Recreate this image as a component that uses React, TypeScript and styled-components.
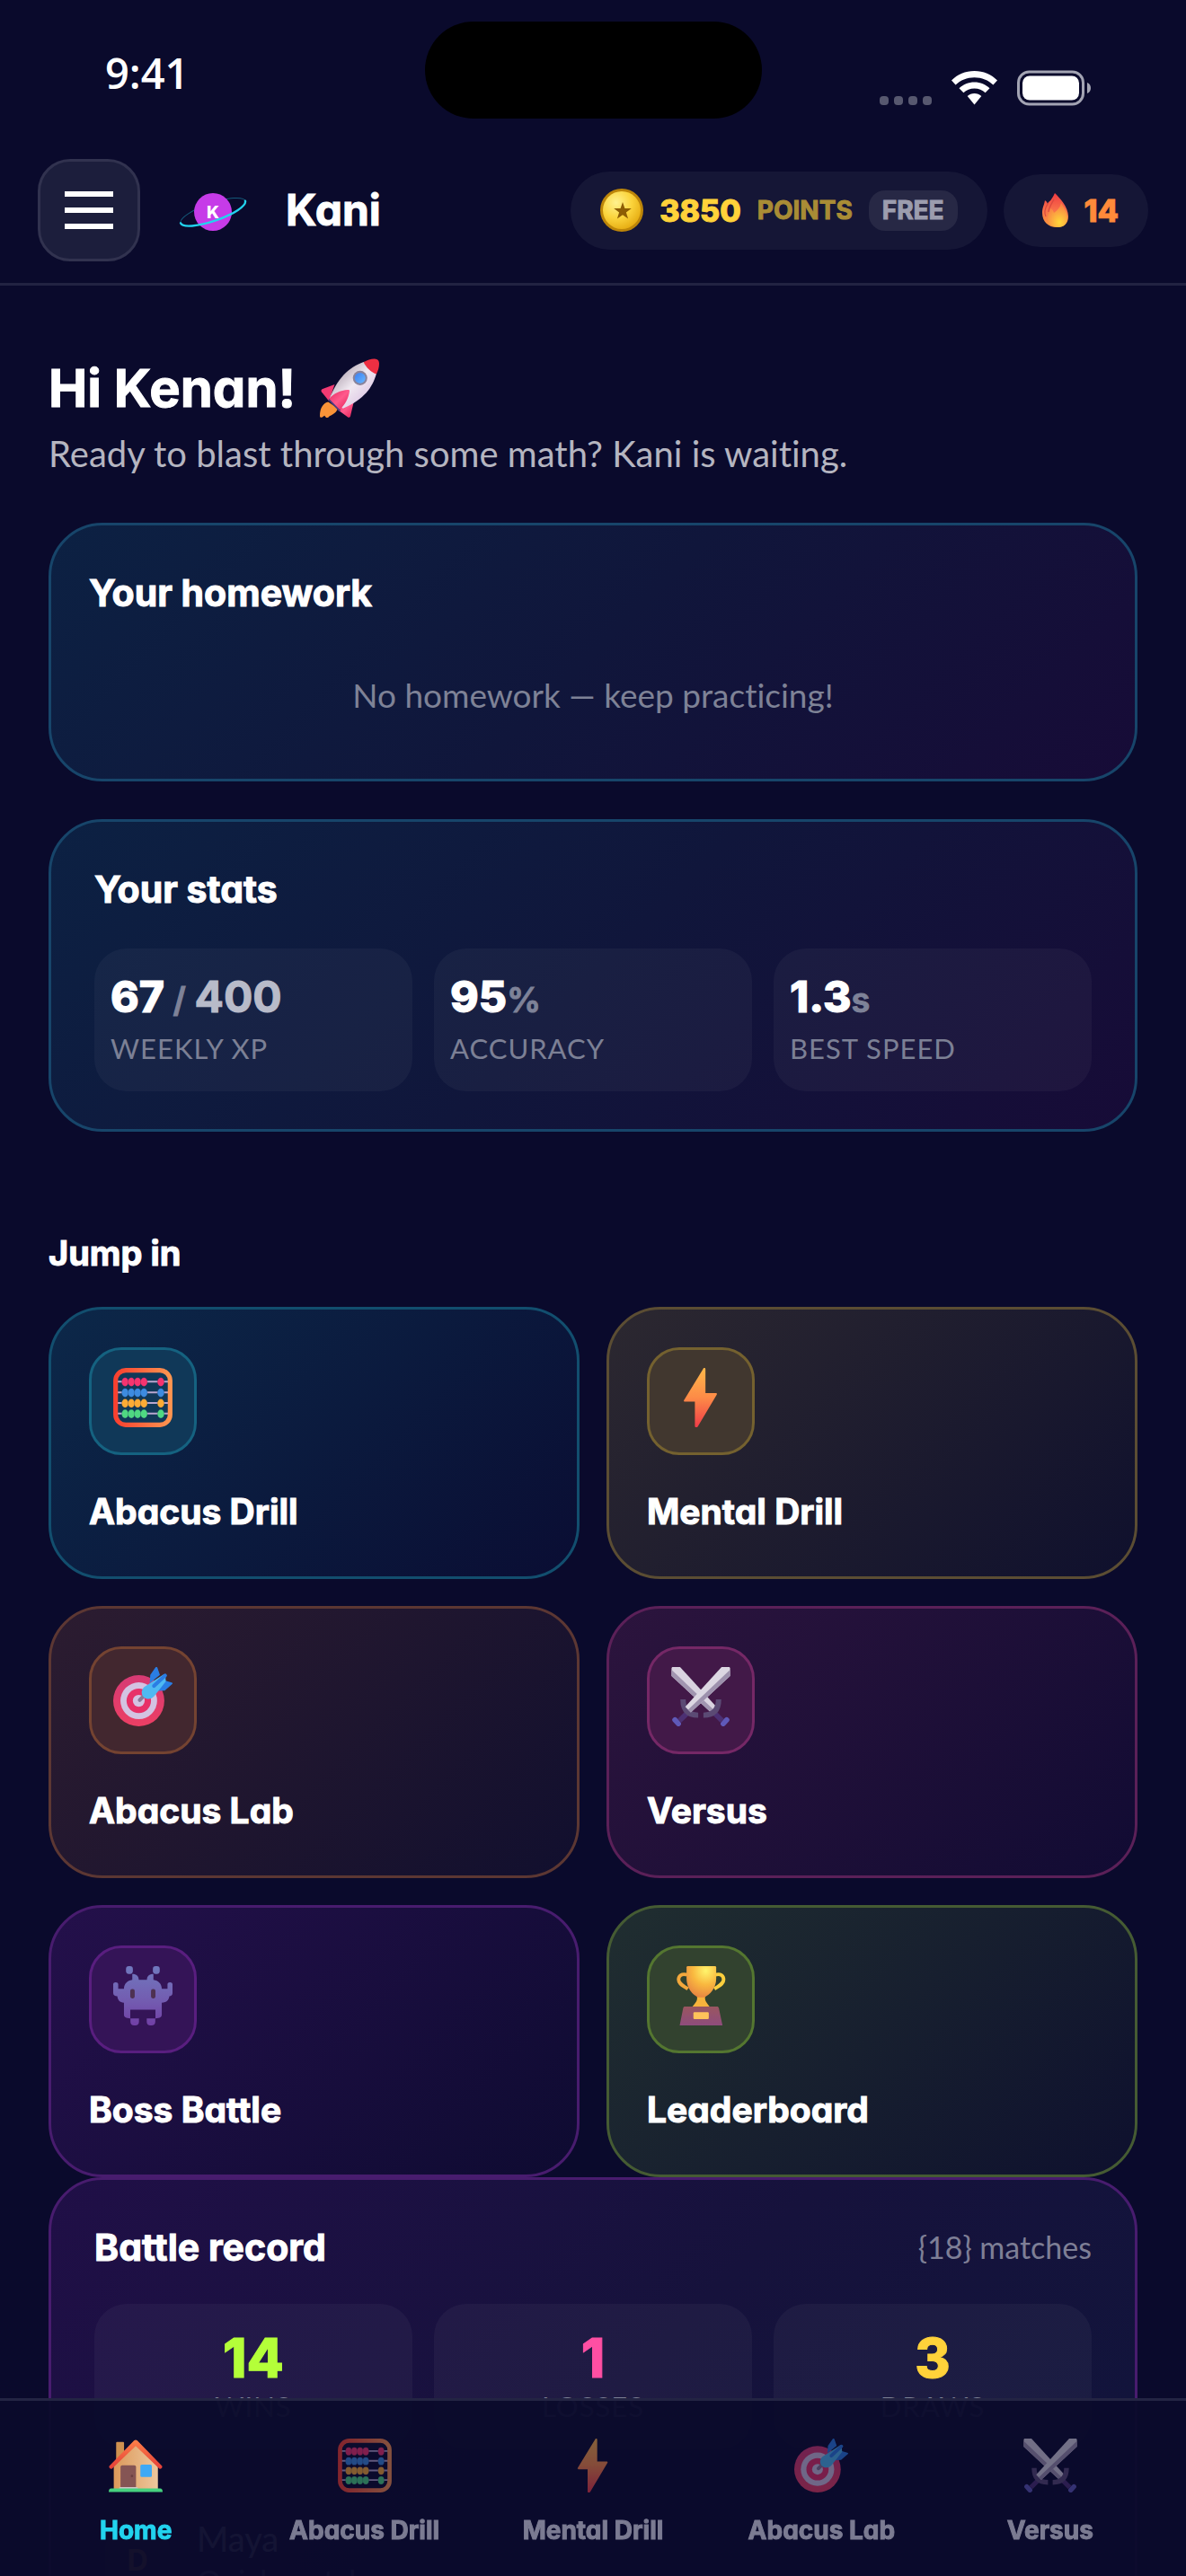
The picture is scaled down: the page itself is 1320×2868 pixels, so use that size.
import React from 'react';
import styled, { createGlobalStyle } from 'styled-components';

type Tone = 'cyan' | 'gold' | 'orange' | 'pink' | 'purple' | 'lime';

const tones: Record<
  Tone,
  { from: string; to: string; border: string; tile: string; tileBorder: string }
> = {
  cyan: {
    from: '#0c2849',
    to: '#0a0d33',
    border: '#124e6e',
    tile: '#103858',
    tileBorder: '#156280',
  },
  gold: {
    from: '#2c2830',
    to: '#0f102d',
    border: '#5b4d33',
    tile: '#41372f',
    tileBorder: '#74612f',
  },
  orange: {
    from: '#2c1c30',
    to: '#110f2e',
    border: '#5c3733',
    tile: '#42272f',
    tileBorder: '#744331',
  },
  pink: {
    from: '#2c143d',
    to: '#110b33',
    border: '#5b2058',
    tile: '#421948',
    tileBorder: '#752866',
  },
  purple: {
    from: '#24104b',
    to: '#0e0b31',
    border: '#481c6e',
    tile: '#341457',
    tileBorder: '#591e7f',
  },
  lime: {
    from: '#202e30',
    to: '#0e102e',
    border: '#455b33',
    tile: '#32422f',
    tileBorder: '#547630',
  },
};

const stats = [
  { value: '67', separator: ' / ', goal: '400', label: 'Weekly XP' },
  { value: '95', unit: '%', label: 'Accuracy' },
  { value: '1.3', unit: 's', label: 'Best speed' },
];

const record = [
  { value: '14', label: 'Wins', color: '#b4ff39' },
  { value: '1', label: 'Losses', color: '#ff4fa3' },
  { value: '3', label: 'Draws', color: '#ffd23a' },
];

const modes: { title: string; tone: Tone; icon: React.ReactNode }[] = [
  { title: 'Abacus Drill', tone: 'cyan', icon: <AbacusIcon /> },
  { title: 'Mental Drill', tone: 'gold', icon: <BoltIcon /> },
  { title: 'Abacus Lab', tone: 'orange', icon: <TargetIcon /> },
  { title: 'Versus', tone: 'pink', icon: <SwordsIcon /> },
  { title: 'Boss Battle', tone: 'purple', icon: <InvaderIcon /> },
  { title: 'Leaderboard', tone: 'lime', icon: <TrophyIcon /> },
];

const tabs = [
  { title: 'Home', icon: <HouseIcon />, active: true },
  { title: 'Abacus Drill', icon: <AbacusIcon /> },
  { title: 'Mental Drill', icon: <BoltIcon /> },
  { title: 'Abacus Lab', icon: <TargetIcon /> },
  { title: 'Versus', icon: <SwordsIcon /> },
];

export default function App() {
  return (
    <>
      <GlobalStyle />
      <Screen>
        <Header>
          <StatusBar>
            <Clock>9:41</Clock>
            <Island />
            <StatusIcons>
              <SignalIcon />
              <WifiIcon />
              <BatteryIcon />
            </StatusIcons>
          </StatusBar>
          <Toolbar>
            <MenuButton type="button" aria-label="Open menu">
              <MenuLine />
              <MenuLine />
              <MenuLine />
            </MenuButton>
            <Logo />
            <Brand>Kani</Brand>
            <Pills>
              <PointsPill>
                <CoinIcon />
                <Points>3850</Points>
                <PointsLabel>POINTS</PointsLabel>
                <Plan>FREE</Plan>
              </PointsPill>
              <StreakPill>
                <FlameIcon />
                <Streak>14</Streak>
              </StreakPill>
            </Pills>
          </Toolbar>
        </Header>

        <Main>
          <Greeting>
            Hi Kenan! <RocketIcon />
          </Greeting>
          <Subtitle>Ready to blast through some math? Kani is waiting.</Subtitle>

          <HomeworkCard>
            <CardTitle>Your homework</CardTitle>
            <Empty>No homework — keep practicing!</Empty>
          </HomeworkCard>

          <StatsCard>
            <CardTitle>Your stats</CardTitle>
            <Tiles>
              {stats.map((stat) => (
                <StatTile key={stat.label}>
                  <StatValue>
                    {stat.value}
                    {stat.separator && <Unit>{stat.separator}</Unit>}
                    {stat.goal && <Goal>{stat.goal}</Goal>}
                    {stat.unit && <Unit>{stat.unit}</Unit>}
                  </StatValue>
                  <TileLabel>{stat.label}</TileLabel>
                </StatTile>
              ))}
            </Tiles>
          </StatsCard>

          <SectionTitle>Jump in</SectionTitle>
          <ModeGrid>
            {modes.map((mode) => (
              <ModeCard key={mode.title} href="#" $tone={mode.tone}>
                <ModeIcon $tone={mode.tone}>{mode.icon}</ModeIcon>
                <ModeTitle>{mode.title}</ModeTitle>
              </ModeCard>
            ))}
          </ModeGrid>

          <BattleCard>
            <BattleHead>
              <CardTitle>Battle record</CardTitle>
              <Matches>{'{18} matches'}</Matches>
            </BattleHead>
            <BattleTiles>
              {record.map((item) => (
                <RecordTile key={item.label}>
                  <RecordValue $color={item.color}>{item.value}</RecordValue>
                  <TileLabel>{item.label}</TileLabel>
                </RecordTile>
              ))}
            </BattleTiles>
            <Match>
              <Avatar>D</Avatar>
              <div>
                <Opponent>Maya</Opponent>
                <MatchType>Quick match</MatchType>
              </div>
            </Match>
          </BattleCard>
        </Main>

        <TabBar>
          {tabs.map((tab) => (
            <Tab key={tab.title} href="#" $active={tab.active}>
              <TabIcon $active={tab.active}>{tab.icon}</TabIcon>
              <TabLabel>{tab.title}</TabLabel>
            </Tab>
          ))}
        </TabBar>
      </Screen>
    </>
  );
}

function Logo() {
  return (
    <LogoSvg viewBox="0 0 90 90" aria-hidden="true">
      <g transform="rotate(-19 45 47)">
        <path
          d="M7 47a38 10 0 0 1 76 0"
          fill="none"
          stroke="#22d3ee"
          strokeWidth="1"
          opacity=".4"
        />
      </g>
      <circle cx="45" cy="47" r="21" fill="#c63be8" />
      <text
        x="45"
        y="54"
        textAnchor="middle"
        fontFamily="Inter, sans-serif"
        fontWeight="800"
        fontSize="19"
        fill="#fff"
      >
        K
      </text>
      <g transform="rotate(-19 45 47)">
        <path
          d="M7 47a38 10 0 0 0 76 0"
          fill="none"
          stroke="#22d3ee"
          strokeWidth="2.4"
          strokeLinecap="round"
        />
      </g>
    </LogoSvg>
  );
}

function SignalIcon() {
  return (
    <svg width="58" height="40" viewBox="0 0 58 40" fill="#57586f">
      {[0, 16, 32, 48].map((x) => (
        <rect key={x} x={x} y="29" width="10" height="10" rx="4" />
      ))}
    </svg>
  );
}

function WifiIcon() {
  return (
    <svg width="51" height="40" viewBox="0 0 51 40" fill="#fff">
      <path d="M25.500 1C15.500 1 6.500 5 0 11.500l4.600 5C10 11.200 17.200 8.200 25.500 8.200s15.500 3 20.900 8.300l4.600-5C44.500 5 35.500 1 25.500 1Z" />
      <path d="M25.500 13.500c-6.600 0-12.500 2.500-17 6.700l4.900 5.100c3.200-3 7.400-4.700 12.100-4.700s8.900 1.700 12.100 4.700l4.900-5.100c-4.500-4.200-10.400-6.700-17-6.700Z" />
      <path d="M25.500 26c-3 0-5.700 1.100-7.800 3L25.500 38.500l7.800-9.500c-2.100-1.900-4.800-3-7.800-3Z" />
    </svg>
  );
}

function BatteryIcon() {
  return (
    <svg width="83" height="40" viewBox="0 0 83 40">
      <rect
        x="1.500"
        y="2"
        width="72"
        height="36"
        rx="12"
        fill="none"
        stroke="#a3a4b3"
        strokeWidth="3"
      />
      <rect x="6" y="6.500" width="63" height="27" rx="8" fill="#fff" />
      <path d="M78 14c3 1 4 3.500 4 6s-1 5-4 6Z" fill="#a3a4b3" />
    </svg>
  );
}

function CoinIcon() {
  return (
    <svg width="48" height="48" viewBox="0 0 48 48" aria-hidden="true">
      <defs>
        <radialGradient id="coin" cx=".35" cy=".3" r=".75">
          <stop offset="0" stopColor="#fff28e" />
          <stop offset=".55" stopColor="#fbd43c" />
          <stop offset="1" stopColor="#e6ac12" />
        </radialGradient>
      </defs>
      <circle cx="24" cy="24" r="24" fill="#bd8609" />
      <circle cx="24" cy="24" r="21" fill="url(#coin)" />
      <path
        d="m25 15 2.400 7h7.400l-5.900 4.400 2.200 7.100L25 29.200l-6.100 4.300 2.200-7.100-5.900-4.400h7.400Z"
        fill="#8d5d04"
      />
    </svg>
  );
}

function FlameIcon() {
  return (
    <svg width="48" height="42" viewBox="0 0 48 42" aria-hidden="true">
      <defs>
        <linearGradient id="flame" x1="0" y1="0" x2="0" y2="1">
          <stop offset="0" stopColor="#f03b42" />
          <stop offset=".5" stopColor="#f8714a" />
          <stop offset="1" stopColor="#fb9a3c" />
        </linearGradient>
        <radialGradient id="flameCore" cx=".6" cy=".8" r=".7">
          <stop offset="0" stopColor="#ffd83a" />
          <stop offset="1" stopColor="#f98544" />
        </radialGradient>
      </defs>
      <path
        d="M24 2c5 5 15 15 15 26 0 8-5 12-13 12-9 0-16-6-16-16 0-6 2-8 3-14 1 1 2 1 3 4 1-3 3-3 4-5 2-3 3-5 4-7Z"
        fill="url(#flame)"
      />
      <path
        d="M16 14c-3 5-4 10-2 14M23 9c-4 7-6 10-6 14"
        fill="none"
        stroke="#d9483f"
        strokeWidth="1.200"
      />
      <path
        d="M31 13c3 5 7 10 7 17 0 6-4 10-10 10-7 0-12-4-12-10 0-4 2-6 3-11 2 1 3 2 4 5 4-3 7-6 8-11Z"
        fill="url(#flameCore)"
      />
    </svg>
  );
}

function RocketIcon() {
  return (
    <RocketSvg viewBox="0 0 32 32" aria-hidden="true">
      <defs>
        <linearGradient id="hull" x1="0" y1="0" x2="1" y2="1">
          <stop offset=".2" stopColor="#b5a8b5" />
          <stop offset=".5" stopColor="#f0e9f1" />
          <stop offset=".8" stopColor="#dfc9e6" />
        </linearGradient>
        <linearGradient id="fin" x1="0" y1="0" x2="1" y2="1">
          <stop offset="0" stopColor="#e62b63" />
          <stop offset=".5" stopColor="#ff5a8c" />
          <stop offset="1" stopColor="#e11d54" />
        </linearGradient>
        <linearGradient id="window" x1="0" y1="0" x2="1" y2="1">
          <stop offset="0" stopColor="#3b7df0" />
          <stop offset="1" stopColor="#68b8ff" />
        </linearGradient>
      </defs>
      <path
        d="M4.500 23.500C2 24 0 26.500 0 31c0 .8.500 1.100 1.300.7l1.200-.8.700.8c.4.400.9.400 1.500.1l.5-.7c2.500-1 4.500-2.700 4.200-4.300Z"
        fill="#f99338"
      />
      <path d="m8 14-6.500 2.500c-.7.300-1 .9-.6 1.500l4 5Z" fill="#f23a72" />
      <path
        d="m18.500 22.500-2 8.600c-.3.800-1 1-1.500.5l-5.500-4Z"
        fill="url(#fin)"
      />
      <path
        d="M24 1.800C15 5 9.500 11 5 22l7.500 5C24 22 28.500 15.500 30.500 8.200Z"
        fill="url(#hull)"
      />
      <path
        d="M23.600 2C25.500.8 28 .1 29.500.2c1.800.1 2.500 1 2.500 2.700 0 2-.6 3.900-1.500 5.600-2.500-.9-5.600-3.600-6.900-6.500Z"
        fill="#ee2f42"
      />
      <circle cx="21.700" cy="10.600" r="3.900" fill="#88839c" />
      <circle cx="21.700" cy="10.600" r="2.900" fill="url(#window)" />
      <path d="m4.500 22.500 6 6.200.8-1-6-6.200Z" fill="#4b3e80" />
      <path
        d="M15.200 17c-4.200.2-7.700 2-10.200 4.800l5.800 5.900c2.600-2.600 4.700-6 5.200-10 .1-.5-.3-.7-.8-.7Z"
        fill="url(#fin)"
      />
    </RocketSvg>
  );
}

function AbacusIcon() {
  const rows = [
    { y: 7.4, color: '#f5346f' },
    { y: 13.2, color: '#3d8be0' },
    { y: 18.9, color: '#fbab35' },
    { y: 24.6, color: '#4fd882' },
  ];
  return (
    <svg viewBox="0 0 32 32" aria-hidden="true">
      <defs>
        <linearGradient id="frame">
          <stop offset="0" stopColor="#f9402f" />
          <stop offset="1" stopColor="#fd9550" />
        </linearGradient>
      </defs>
      {rows.map((row) => (
        <g key={row.y}>
          <path d={`M2 ${row.y}h28`} stroke="#b9a7d0" strokeWidth="1" />
          {[6.4, 9.8, 13.2, 16.6, 25.7].map((x) => (
            <ellipse
              key={x}
              cx={x}
              cy={row.y + 0.2}
              rx="1.850"
              ry="2.350"
              fill={row.color}
              stroke="#10204a"
              strokeOpacity=".3"
              strokeWidth=".3"
            />
          ))}
        </g>
      ))}
      <rect
        x="1.300"
        y="1.300"
        width="29.400"
        height="29.400"
        rx="5.500"
        fill="none"
        stroke="url(#frame)"
        strokeWidth="2.500"
      />
    </svg>
  );
}

function BoltIcon() {
  return (
    <svg viewBox="0 0 32 32" aria-hidden="true">
      <defs>
        <linearGradient id="bolt" x1="0" y1="0" x2="0" y2="1">
          <stop offset="0" stopColor="#ffb84a" />
          <stop offset=".5" stopColor="#fd8b47" />
          <stop offset="1" stopColor="#f03b48" />
        </linearGradient>
      </defs>
      <path
        d="M17.400.3c.3-.6 1.100-.4 1.100.3v13h5.600c.5 0 .7.400.5.800l-10.300 17.300c-.5.700-1.500.5-1.500-.3V18.200H7.400c-.5 0-.7-.4-.5-.8Z"
        fill="url(#bolt)"
      />
    </svg>
  );
}

function TargetIcon() {
  return (
    <svg viewBox="0 0 32 32" aria-hidden="true">
      <defs>
        <linearGradient id="disc" x1="0" y1="0" x2="0" y2="1">
          <stop offset="0" stopColor="#d63a74" />
          <stop offset="1" stopColor="#ec3f64" />
        </linearGradient>
      </defs>
      <circle cx="13.800" cy="18.200" r="13.800" fill="url(#disc)" />
      <circle cx="13.800" cy="18.200" r="9.900" fill="#d3c3e2" />
      <circle cx="13.800" cy="18.200" r="6.600" fill="#e83168" />
      <circle cx="13.800" cy="18.200" r="3.200" fill="#d3c3e2" />
      <path
        d="m14.300 17.800 3.200-3.200"
        stroke="#8a7896"
        strokeWidth="2"
        strokeLinecap="round"
      />
      <path
        d="M22.800.2 20 4.200l-.3 4.500 5.500-4.500-1.300-3.700c-.2-.6-.8-.7-1.100-.3ZM31.800 9.200l-4 3.500-4.500.2 4.600-5.600 3.600 1.100c.6.2.7.5.3.8Z"
        fill="#2a7de4"
      />
      <path
        d="M27 4.100c.8-.7 1.800.2 1.200 1l.2 2.700-6.300 8c-1.800 2-4.200 1.700-5.600.4s-1.600-3.600.2-5.400Z"
        fill="#4fb9f2"
      />
      <path
        d="m22 10.200 6-5.600"
        stroke="#2a7de4"
        strokeWidth="2"
        strokeLinecap="round"
      />
    </svg>
  );
}

function SwordsIcon() {
  return (
    <svg viewBox="0 0 32 32" aria-hidden="true">
      <path
        d="m9.500 24-5 5M22.500 24l5 5"
        stroke="#4c3073"
        strokeWidth="2.800"
      />
      <path
        d="m2 28.500 1.900 2.100M30 28.500l-1.900 2.100"
        stroke="#5f59b8"
        strokeWidth="2.800"
        strokeLinecap="round"
      />
      <path d="M.6 0h4.200l19.600 21.500-3 3L.2 4.800V.5Z" fill="#d9d3e0" />
      <path d="M.2 1.500v3.300l21.200 19.700 1.500-1.500Z" fill="#a195b0" />
      <path
        d="M6.400 17.500C6.400 23 9 26 14.600 26M25.600 17.500C25.600 23 23 26 17.400 26"
        fill="none"
        stroke="#5b4a74"
        strokeWidth="2.900"
      />
      <path d="M31.400 0h-4.200L7.600 21.500l3 3L31.800 4.800V.5Z" fill="#dcd7e2" />
      <path d="M31.800 1.500v3.300L10.600 24.500 9.100 23Z" fill="#9d91ad" />
    </svg>
  );
}

function InvaderIcon() {
  return (
    <svg viewBox="0 0 32 32" aria-hidden="true">
      <defs>
        <linearGradient
          id="invader"
          gradientUnits="userSpaceOnUse"
          x1="0"
          y1="0"
          x2="0"
          y2="32"
        >
          <stop offset="0" stopColor="#7079be" />
          <stop offset=".6" stopColor="#735bb0" />
          <stop offset="1" stopColor="#713fa5" />
        </linearGradient>
      </defs>
      <g fill="url(#invader)">
        <rect x="6.900" y="0" width="3.700" height="4.200" rx="1.500" />
        <rect x="21.400" y="0" width="3.700" height="4.200" rx="1.500" />
        <path d="M10.300 4.200c2.300 0 3.500 1.200 3.500 3.200h4.400c0-2 1.200-3.200 3.500-3.200v3.200c2.600.3 4.500 2.200 4.500 4.800h3.100V9.800c0-1.500 2.700-1.500 2.700 0v4.800c0 1-.7 1.700-1.700 1.700-.3 2-1.300 3.400-4.100 3.400v6.500c0 1.300-1 2-3.400 2v-4.700H9.200v4.700c-2.300 0-3.400-.7-3.400-2v-6.500c-2.300 0-3.300-1.300-3.600-3.400-1.400 0-2.200-.7-2.200-1.700V9.800c0-1.500 2.700-1.500 2.700 0v2.400h3.100c0-2.600 1.900-4.500 4.500-4.800Z" />
        <path d="M9.300 28.200h4.600V30c0 1.200-.8 2-2 2h-.6c-1.200 0-2-.8-2-2ZM18.100 28.200h4.600V30c0 1.200-.8 2-2 2h-.6c-1.200 0-2-.8-2-2Z" />
      </g>
      <rect x="9.200" y="12.400" width="2.400" height="5" rx="1" fill="#4e3152" />
      <rect x="20.400" y="12.400" width="2.400" height="5" rx="1" fill="#4e3152" />
    </svg>
  );
}

function TrophyIcon() {
  return (
    <svg viewBox="0 0 32 32" aria-hidden="true">
      <defs>
        <radialGradient id="cup" cx=".65" cy=".15" r=".9">
          <stop offset="0" stopColor="#fff56c" />
          <stop offset=".5" stopColor="#f9b83f" />
          <stop offset="1" stopColor="#e68242" />
        </radialGradient>
        <linearGradient id="plinth" x1="0" y1="0" x2="0" y2="1">
          <stop offset="0" stopColor="#9a5660" />
          <stop offset="1" stopColor="#8e4c7c" />
        </linearGradient>
      </defs>
      <path
        d="M8.800 4.700C5.500 3.800 4 5.200 4 7.300c0 2.300 2.500 3.200 5 5"
        fill="none"
        stroke="#f3a83c"
        strokeWidth="1.900"
      />
      <path
        d="M23.600 4.700c3.300-.9 4.700.5 4.700 2.600 0 2.300-2.500 3.200-5 5"
        fill="none"
        stroke="#fbcf3e"
        strokeWidth="1.900"
      />
      <path
        d="M14 15.500h4.300v2.300c.2 1.600 1.500 2.600 2.600 4.200h-9.600c1.200-1.600 2.500-2.600 2.700-4.200Z"
        fill="#f7b33c"
      />
      <path
        d="M8.900 0h14.800c.3 0 .6.300.6.600v6.200c0 5.200-3.500 8.600-6.300 10h-3.600c-2.800-1.400-6.100-4.800-6.100-10V.6c0-.3.300-.6.600-.6Z"
        fill="url(#cup)"
      />
      <path
        d="M7.400 21.800h17.300c.5 0 .9.300 1 .8L27.700 32H4.600l1.900-9.400c.1-.5.400-.8.900-.8Z"
        fill="url(#plinth)"
      />
      <rect x="12" y="24.800" width="8.300" height="3.800" rx=".6" fill="#ffc35a" />
    </svg>
  );
}

function HouseIcon() {
  return (
    <svg viewBox="0 0 32 32" aria-hidden="true">
      <defs>
        <linearGradient id="wall">
          <stop offset="0" stopColor="#dc995a" />
          <stop offset="1" stopColor="#edc79d" />
        </linearGradient>
        <linearGradient id="roof" x1="0" y1="0" x2="0" y2="1">
          <stop offset="0" stopColor="#ff8149" />
          <stop offset="1" stopColor="#e23d37" />
        </linearGradient>
      </defs>
      <rect x="4.400" y="2" width="4.700" height="12" rx=".5" fill="#cf9150" />
      <path d="M16 3 29.200 16v14H3V16Z" fill="url(#wall)" />
      <path
        d="M15 1.200c.6-.6 1.400-.6 2 0l14.500 14.900c.9 1-.7 2.500-1.600 1.600L16 4.400 2.100 17.700c-.9.900-2.500-.6-1.600-1.600Z"
        fill="url(#roof)"
      />
      <rect x="7" y="15.800" width="9.200" height="14" rx="1" fill="#855554" />
      <circle cx="13.800" cy="22.200" r=".7" fill="#6a3e40" />
      <rect
        x="18.800"
        y="15.500"
        width="6.800"
        height="7.300"
        rx=".8"
        fill="#3fa9f5"
      />
      <path d="M6.500 28.800h10.500l.6 1.200H6Z" fill="#d0c2c4" />
      <path
        d="M1.500 29.600h29c1 0 1.500.6 1.500 2.100H0c0-1.500.5-2.100 1.500-2.100Z"
        fill="#46d17f"
      />
    </svg>
  );
}

const display = `'Inter', 'Open Sans', sans-serif`;
const body = `'Lato', 'Open Sans', sans-serif`;

const GlobalStyle = createGlobalStyle`
  * {
    box-sizing: border-box;
  }

  body {
    margin: 0;
    background: #0a0a2c;
    color: #fff;
    font-family: ${body};
    font-variant-ligatures: none;
  }

  h1,
  h2,
  p {
    margin: 0;
  }

  svg {
    display: block;
    flex: none;
  }
`;

const Screen = styled.div`
  height: 100vh;
  overflow: hidden;
  display: flex;
  flex-direction: column;
`;

const Header = styled.header`
  flex: none;
  border-bottom: 3px solid #222342;
`;

const StatusBar = styled.div`
  display: grid;
  grid-template-columns: 1fr auto 1fr;
  align-items: center;
  padding: 24px 105px 45px;
`;

const Clock = styled.span`
  padding: 6px 0 0 12px;
  font-family: 'Open Sans', sans-serif;
  font-size: 47px;
  font-weight: 600;
  line-height: 60px;
`;

const Island = styled.div`
  width: 375px;
  height: 108px;
  border-radius: 54px;
  background: #000;
`;

const StatusIcons = styled.div`
  display: flex;
  justify-content: flex-end;
  align-items: center;
  gap: 22px;
  padding-top: 39px;
`;

const Toolbar = styled.div`
  display: flex;
  align-items: center;
  gap: 36px;
  padding: 0 42px 24px;
`;

const MenuButton = styled.button`
  display: flex;
  flex-direction: column;
  align-items: center;
  justify-content: center;
  gap: 12px;
  width: 114px;
  height: 114px;
  padding: 0;
  border: 3px solid #31324f;
  border-radius: 36px;
  background: #1c1e3c;
`;

const MenuLine = styled.span`
  width: 54px;
  height: 6px;
  background: #fff;
`;

const LogoSvg = styled.svg`
  width: 90px;
  height: 90px;
`;

const DisplayText = styled.span`
  font-family: ${display};
  font-weight: 700;
  font-feature-settings: 'cv11';
  -webkit-text-stroke: 1px currentColor;
  stroke-linejoin: round;
`;

const Brand = styled(DisplayText)`
  font-size: 48px;
  line-height: 60px;
`;

const Pills = styled.div`
  display: flex;
  align-items: center;
  gap: 18px;
  margin-left: auto;
`;

const Pill = styled.div`
  display: flex;
  align-items: center;
  padding: 0 33px;
  border-radius: 45px;
  background: #151636;
`;

const PointsPill = styled(Pill)`
  gap: 18px;
  height: 87px;
`;

const StreakPill = styled(Pill)`
  gap: 9px;
  height: 81px;
`;

const Points = styled(DisplayText)`
  font-size: 34px;
  font-weight: 800;
  color: #ffd23a;
`;

const PointsLabel = styled(DisplayText)`
  font-size: 28px;
  color: #a98c35;
`;

const Plan = styled(DisplayText)`
  padding: 0 15px;
  border-radius: 18px;
  background: #272845;
  color: #9c9dae;
  font-size: 28px;
  line-height: 45px;
`;

const Streak = styled(DisplayText)`
  font-size: 34px;
  font-weight: 800;
  color: #ff8a3a;
`;

const Main = styled.main`
  flex: 1;
  min-height: 0;
  overflow-y: auto;
  scrollbar-width: none;
  padding: 78px 54px 200px;
`;

const Greeting = styled(DisplayText).attrs({ as: 'h1' })`
  display: flex;
  align-items: center;
  gap: 27px;
  margin-bottom: 10px;
  font-size: 58px;
  line-height: 72px;
`;

const RocketSvg = styled.svg`
  width: 66px;
  height: 66px;
`;

const Subtitle = styled.p`
  margin-bottom: 50px;
  color: #b5b5c0;
  font-size: 40px;
  line-height: 54px;
`;

const Card = styled.section`
  border: 3px solid #17456a;
  border-radius: 60px;
  background: linear-gradient(135deg, #0c2143, #10163b 50%, #170b37) border-box;
`;

const HomeworkCard = styled(Card)`
  padding: 48px 42px 69px;
  margin-bottom: 42px;
`;

const StatsCard = styled(Card)`
  padding: 48px 48px 42px;
  margin-bottom: 111px;
`;

const CardTitle = styled(DisplayText).attrs({ as: 'h2' })`
  font-size: 41px;
  line-height: 54px;
`;

const Empty = styled.p`
  margin-top: 63px;
  color: #7e8296;
  font-size: 37px;
  line-height: 48px;
  text-align: center;
`;

const Tiles = styled.div`
  display: grid;
  grid-template-columns: repeat(3, 1fr);
  gap: 24px;
  margin-top: 39px;
`;

const Tile = styled.div`
  padding: 27px 18px 30px;
  border-radius: 36px;
  background: rgba(255, 255, 255, 0.04);
`;

const StatTile = styled(Tile)``;

const StatValue = styled(DisplayText)`
  display: block;
  margin-bottom: 12px;
  font-size: 48px;
  font-weight: 800;
  line-height: 54px;
  white-space: pre;
`;

const Unit = styled.span`
  color: #7e8298;
  font-size: 38px;
  font-weight: 600;
  line-height: 38px;
`;

const Goal = styled.span`
  color: #b8bbc9;
  font-weight: 700;
`;

const TileLabel = styled.div`
  color: #7c8095;
  font-size: 31px;
  line-height: 36px;
  letter-spacing: 1px;
  text-transform: uppercase;
`;

const SectionTitle = styled(DisplayText).attrs({ as: 'h2' })`
  margin-bottom: 36px;
  font-size: 38px;
  line-height: 48px;
`;

const ModeGrid = styled.nav`
  display: grid;
  grid-template-columns: repeat(2, 1fr);
  gap: 30px;
`;

const ModeCard = styled.a<{ $tone: Tone }>`
  display: block;
  padding: 42px 42px 48px;
  border: 3px solid ${({ $tone }) => tones[$tone].border};
  border-radius: 60px;
  background: linear-gradient(
      135deg,
      ${({ $tone }) => tones[$tone].from},
      ${({ $tone }) => tones[$tone].to}
    )
    border-box;
  color: #fff;
  text-decoration: none;
`;

const ModeIcon = styled.div<{ $tone: Tone }>`
  display: flex;
  align-items: center;
  justify-content: center;
  width: 120px;
  height: 120px;
  padding-bottom: 8px;
  margin-bottom: 39px;
  border: 3px solid ${({ $tone }) => tones[$tone].tileBorder};
  border-radius: 36px;
  background: ${({ $tone }) => tones[$tone].tile};

  svg {
    width: 66px;
    height: 66px;
  }
`;

const ModeTitle = styled(DisplayText)`
  display: block;
  font-size: 39px;
  line-height: 48px;
`;

const BattleCard = styled(Card)`
  padding: 48px 48px 42px;
  border-color: #481c6e;
  background: linear-gradient(135deg, #200f47, #16123c 50%, #10153b) border-box;
`;

const BattleHead = styled.div`
  display: flex;
  align-items: center;
  justify-content: space-between;
`;

const Matches = styled.span`
  color: #7e7f96;
  font-size: 34px;
  line-height: 54px;
`;

const BattleTiles = styled(Tiles)`
  margin-top: 36px;
`;

const RecordTile = styled(Tile)`
  padding-top: 30px;
  text-align: center;
`;

const RecordValue = styled(DisplayText)<{ $color: string }>`
  display: block;
  margin-bottom: 6px;
  color: ${({ $color }) => $color};
  font-size: 60px;
  font-weight: 800;
  line-height: 60px;
`;

const Match = styled.div`
  display: flex;
  align-items: center;
  gap: 30px;
  margin-top: 75px;
  padding-left: 12px;
`;

const Avatar = styled.div`
  display: flex;
  align-items: center;
  justify-content: center;
  width: 72px;
  height: 72px;
  border-radius: 24px;
  background: #3b2a3c;
  color: #ffb03a;
  font-family: ${display};
  font-size: 32px;
  font-weight: 700;
`;

const Opponent = styled.div`
  font-size: 38px;
  line-height: 48px;
`;

const MatchType = styled.div`
  color: #9fa0b4;
  font-size: 34px;
  line-height: 48px;
`;

const TabBar = styled.nav`
  position: fixed;
  right: 0;
  bottom: 0;
  left: 0;
  display: grid;
  grid-template-columns: repeat(5, 1fr);
  height: 198px;
  padding: 42px 24px 0;
  border-top: 3px solid #232443;
  background: rgba(10, 10, 44, 0.96);
`;

const Tab = styled.a<{ $active?: boolean }>`
  display: flex;
  flex-direction: column;
  align-items: center;
  gap: 24px;
  color: ${({ $active }) => ($active ? '#22d3ee' : '#7b7b92')};
  text-decoration: none;
`;

const TabIcon = styled.span<{ $active?: boolean }>`
  opacity: ${({ $active }) => ($active ? 1 : 0.5)};

  svg {
    width: 60px;
    height: 60px;
  }
`;

const TabLabel = styled(DisplayText)`
  font-size: 28px;
  line-height: 36px;
  white-space: nowrap;
`;
